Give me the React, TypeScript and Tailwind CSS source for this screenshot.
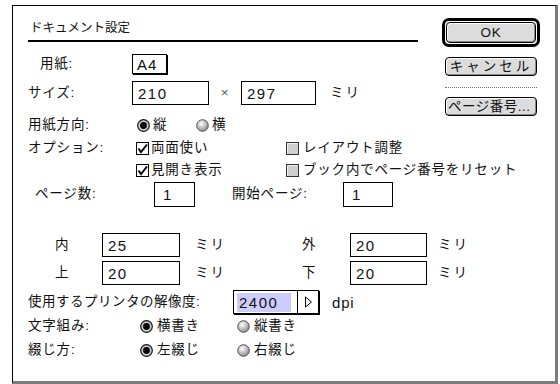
import React from 'react';

const Radio = ({ on }: { on?: boolean }) =>
  on ? (
    <svg width="13" height="13" viewBox="0 0 13 13" className="shrink-0">
      <circle cx="6.5" cy="6.5" r="5.8" fill="#cfcfcf" stroke="#111" strokeWidth="1.2" />
      <circle cx="6.5" cy="6.5" r="3.4" fill="#000" />
    </svg>
  ) : (
    <svg width="13" height="13" viewBox="0 0 13 13" className="shrink-0">
      <defs>
        <radialGradient id="rg" cx="40%" cy="35%" r="65%">
          <stop offset="0%" stopColor="#ffffff" />
          <stop offset="100%" stopColor="#8c8c8c" />
        </radialGradient>
      </defs>
      <circle cx="6.5" cy="6.5" r="5.8" fill="url(#rg)" stroke="#555" strokeWidth="1" />
    </svg>
  );

const Check = ({ on }: { on?: boolean }) =>
  on ? (
    <svg width="13" height="13" viewBox="0 0 13 13" className="shrink-0">
      <rect x="0.5" y="0.5" width="12" height="12" fill="#fff" stroke="#000" />
      <path d="M2.5 6.5 L5 10 L11 2.5" fill="none" stroke="#000" strokeWidth="2" />
    </svg>
  ) : (
    <svg width="13" height="13" viewBox="0 0 13 13" className="shrink-0">
      <rect x="0.5" y="0.5" width="12" height="12" fill="#cfcfcf" stroke="#333" />
      <path d="M1.5 11.5 V1.5 H11.5" fill="none" stroke="#eee" />
    </svg>
  );

const Field = ({ value, w, className = '' }: { value: string; w: string; className?: string }) => (
  <div className={`${w} h-[24px] border border-black bg-white flex items-center pl-[5px] tracking-[1.5px] text-[15px] ${className}`}>
    {value}
  </div>
);

const Btn = ({ children, className = '' }: { children: React.ReactNode; className?: string }) => (
  <div
    className={`rounded-[4px] border border-black bg-[#dcdcdc] shadow-[inset_1px_1px_0_#fff,inset_-1px_-1px_0_#8a8a8a] flex items-center justify-center ${className}`}
  >
    {children}
  </div>
);

export default function App() {
  return (
    <div className="min-h-screen bg-white pl-[12px] pt-[5px] font-['Liberation_Sans','Noto_Sans_CJK_JP',sans-serif] text-[13.5px] tracking-[0.8px] text-[#111] leading-none">
      <div className="w-[546px] h-[379px] border-l border-t border-black border-r-[3px] border-b-[3px] border-r-[#7c7c7c] border-b-[#7c7c7c] flex flex-col">
        <div className="flex">
          <div className="ml-[15px] flex flex-col">
            <div className="mt-[12px] h-[20px] pl-[2px] flex items-center text-[12.5px] tracking-normal">ドキュメント設定</div>
            <div className="mt-[2px] h-[2px] w-[390px] bg-black" />
            <div className="mt-[11px] h-[22px] flex items-center">
              <div className="w-[104px] pl-[12px]">用紙:</div>
              <div className="w-[35px] h-[20px] border border-black shadow-[1px_1px_0_#000] flex items-center pl-[4px] text-[15px] tracking-[1px]">A4</div>
            </div>
            <div className="mt-[6px] h-[24px] flex items-center">
              <div className="w-[104px]">サイズ:</div>
              <Field value="210" w="w-[77px]" />
              <div className="w-[32px] text-center text-[#555]">×</div>
              <Field value="297" w="w-[75px]" />
              <div className="ml-[14px] tracking-[2px]">ミリ</div>
            </div>
            <div className="mt-[10px] h-[20px] flex items-center">
              <div className="w-[109px]">用紙方向:</div>
              <Radio on />
              <div className="ml-[3px] w-[43px]">縦</div>
              <Radio />
              <div className="ml-[3px]">横</div>
            </div>
          </div>
          <div className="ml-auto mr-[15px] mt-[12px] w-[98px] flex flex-col">
            <div className="h-[29px] rounded-[7px] border-[3px] border-black p-[1px]">
              <Btn className="h-full">OK</Btn>
            </div>
            <Btn className="mt-[10px] mx-[3px] h-[19px] tracking-[3px]">キャンセル</Btn>
            <div className="mt-[11px] mx-[3px] border-t border-dotted border-[#777]" />
            <Btn className="mt-[9px] mx-[3px] h-[19px] justify-start pl-[2px] tracking-[0.5px]">ページ番号...</Btn>
          </div>
        </div>

        <div className="ml-[15px] flex flex-col">
          <div className="mt-[2px] h-[22px] flex items-center">
            <div className="w-[108px]">オプション:</div>
            <Check on />
            <div className="ml-[2px] w-[135px]">両面使い</div>
            <Check />
            <div className="ml-[4px]">レイアウト調整</div>
          </div>
          <div className="h-[22px] flex items-center">
            <div className="w-[108px]" />
            <Check on />
            <div className="ml-[2px] w-[135px]">見開き表示</div>
            <Check />
            <div className="ml-[4px]">ブック内でページ番号をリセット</div>
          </div>
          <div className="h-[26px] flex items-center">
            <div className="w-[126px] pl-[7px]">ページ数:</div>
            <Field value="1" w="w-[41px]" className="h-[25px] pl-[8px]" />
            <div className="ml-[37px] w-[111px]">開始ページ:</div>
            <Field value="1" w="w-[50px]" className="h-[25px] pl-[8px]" />
          </div>
          <div className="mt-[25px] h-[26px] flex items-center">
            <div className="w-[74px] pl-[27px]">内</div>
            <Field value="25" w="w-[78px]" />
            <div className="ml-[15px] w-[107px] tracking-[2px]">ミリ</div>
            <div className="w-[48px]">外</div>
            <Field value="20" w="w-[77px]" />
            <div className="ml-[11px] tracking-[2px]">ミリ</div>
          </div>
          <div className="mt-[2px] h-[26px] flex items-center">
            <div className="w-[74px] pl-[27px]">上</div>
            <Field value="20" w="w-[78px]" />
            <div className="ml-[15px] w-[107px] tracking-[2px]">ミリ</div>
            <div className="w-[48px]">下</div>
            <Field value="20" w="w-[77px]" />
            <div className="ml-[11px] tracking-[2px]">ミリ</div>
          </div>
          <div className="mt-[3px] h-[26px] flex items-center">
            <div className="w-[205px] tracking-[0.5px]">使用するプリンタの解像度:</div>
            <div className="flex h-[24px] w-[86px] border border-black bg-white shadow-[1px_1px_0_#000]">
              <div className="flex-1 flex items-center pl-[3px]">
                <span className="bg-[#ccccff] h-[19px] w-[54px] flex items-center pl-[2px] text-[15px] tracking-[1.5px]">2400</span>
              </div>
              <div className="w-[21px] border-l border-black flex items-center justify-center">
                <svg width="9" height="12" viewBox="0 0 9 12">
                  <path d="M1.5 1 L7.5 6 L1.5 11 Z" fill="none" stroke="#000" />
                </svg>
              </div>
            </div>
            <div className="ml-[13px] text-[15px]">dpi</div>
          </div>
          <div className="h-[22px] flex items-center">
            <div className="w-[112px]">文字組み:</div>
            <Radio on />
            <div className="ml-[4px] w-[80px]">横書き</div>
            <Radio />
            <div className="ml-[4px]">縦書き</div>
          </div>
          <div className="mt-[2px] h-[22px] flex items-center">
            <div className="w-[112px]">綴じ方:</div>
            <Radio on />
            <div className="ml-[4px] w-[80px]">左綴じ</div>
            <Radio />
            <div className="ml-[4px]">右綴じ</div>
          </div>
        </div>
      </div>
    </div>
  );
}
